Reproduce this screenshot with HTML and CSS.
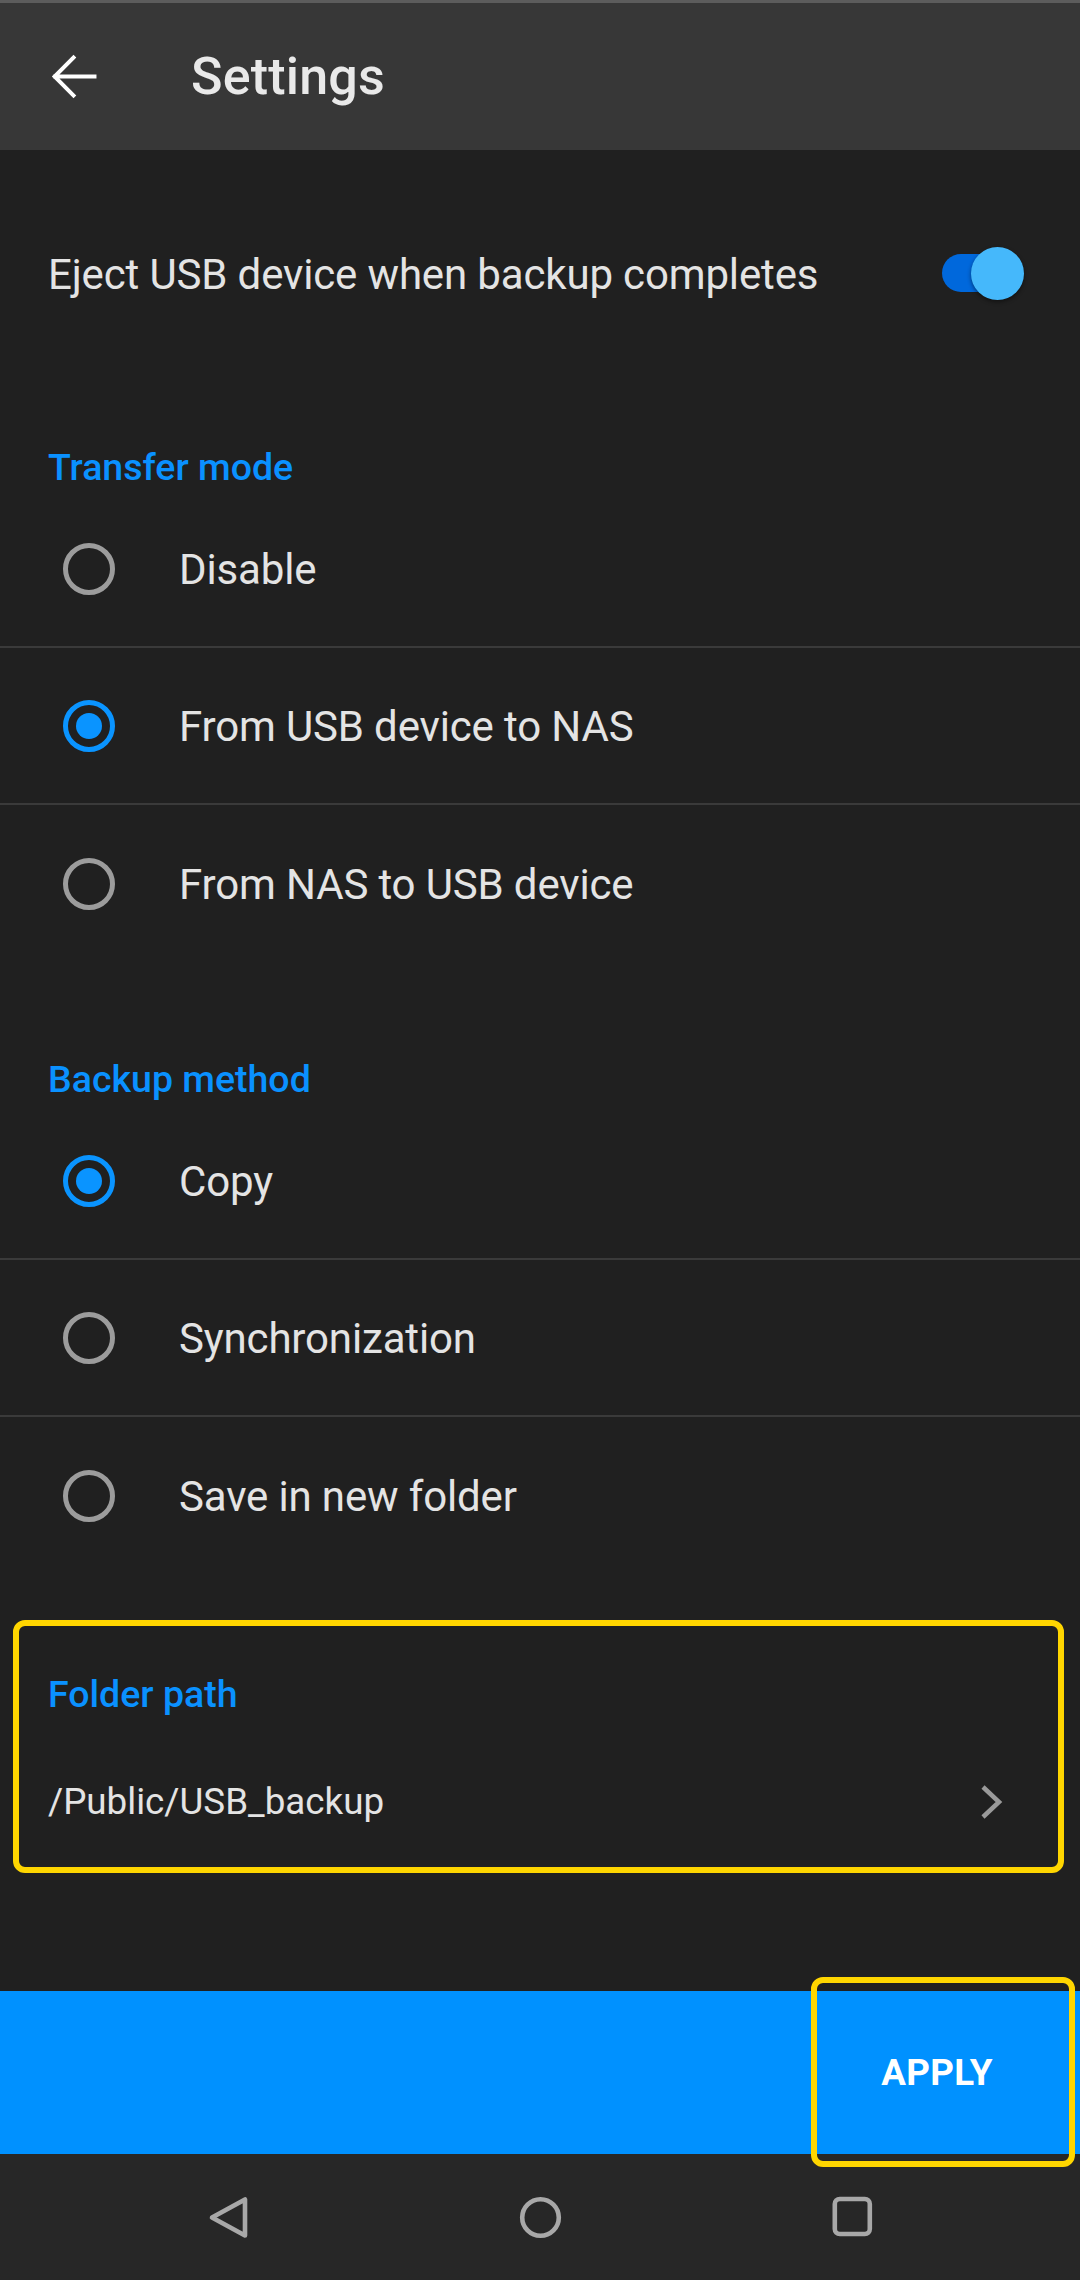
FILE: index.html
```
<!DOCTYPE html>
<html>
<head>
<meta charset="utf-8">
<link rel="stylesheet" href="styles.css">
</head>
<body>
<div class="screen">
  <div class="statusline"></div>
  <header class="appbar">
    <svg class="back" viewBox="0 0 24 24" width="63" height="63"><path d="M20 12H5M12 4.8L4.8 12l7.2 7.2" fill="none" stroke="#ffffff" stroke-width="1.5" stroke-linecap="square"/></svg>
    <h1 class="title">Settings</h1>
  </header>
  <main class="content">
    <div class="switch-row">
      <span class="label">Eject USB device when backup completes</span>
      <span class="switch"><span class="track"></span><span class="thumb"></span></span>
    </div>

    <div class="section-title first">Transfer mode</div>
    <div class="radio-group">
      <div class="radio-row"><span class="radio"></span><span class="label">Disable</span></div>
      <div class="radio-row"><span class="radio on"></span><span class="label">From USB device to NAS</span></div>
      <div class="radio-row"><span class="radio"></span><span class="label">From NAS to USB device</span></div>
    </div>

    <div class="section-title second">Backup method</div>
    <div class="radio-group">
      <div class="radio-row"><span class="radio on"></span><span class="label">Copy</span></div>
      <div class="radio-row"><span class="radio"></span><span class="label">Synchronization</span></div>
      <div class="radio-row"><span class="radio"></span><span class="label">Save in new folder</span></div>
    </div>

    <div class="folder-box">
      <div class="folder-title">Folder path</div>
      <div class="path-row">
        <span class="path">/Public/USB_backup</span>
        <svg class="chev" viewBox="0 0 30 40" width="30" height="40"><path d="M6 5L22 20L6 35" fill="none" stroke="#9a9a9a" stroke-width="4.5"/></svg>
      </div>
    </div>
  </main>
  <div class="action-bar">
    <div class="apply">APPLY</div>
  </div>
  <nav class="navbar">
    <svg class="nav-icon" viewBox="0 0 63 63" width="63" height="63"><path d="M15 31.5L48 13.5V49.5Z" fill="none" stroke="#a8a8a8" stroke-width="4.6" stroke-linejoin="round"/></svg>
    <svg class="nav-icon" viewBox="0 0 63 63" width="63" height="63"><circle cx="31.5" cy="31.5" r="18.3" fill="none" stroke="#a8a8a8" stroke-width="4.6"/></svg>
    <svg class="nav-icon" viewBox="0 0 63 63" width="63" height="63"><rect x="13.8" y="13" width="35" height="35" rx="5" fill="none" stroke="#a8a8a8" stroke-width="4.6"/></svg>
  </nav>
</div>
</body>
</html>
```
FILE: styles.css
```
* { box-sizing: border-box; }
html, body { margin: 0; padding: 0; }
body {
  background: #202020;
  font-family: Roboto, "Noto Sans", "Liberation Sans", sans-serif;
  color: #e4e4e4;
}
.screen {
  width: 1080px;
  height: 2280px;
  display: flex;
  flex-direction: column;
  background: #202020;
  overflow: hidden;
}
.statusline { height: 3px; background: #5c5c5c; flex: none; }
.appbar {
  height: 147px;
  flex: none;
  background: #373737;
  display: flex;
  align-items: center;
  padding-left: 42px;
}
.back { display: block; flex: none; }
.title {
  margin: 0 0 0 86px;
  font-size: 52px;
  font-weight: 500;
  color: #e9e9e9;
  letter-spacing: 0.2px;
}
.content { flex: 1; display: flex; flex-direction: column; }
.label {
  font-size: 42px;
  color: #e4e4e4;
  line-height: 48px;
  letter-spacing: -0.15px;
  padding-top: 3px;
}
.switch-row {
  height: 246px;
  display: flex;
  align-items: center;
  justify-content: space-between;
  padding: 0 56px 0 48px;
}
.switch { position: relative; width: 82px; height: 53px; flex: none; }
.track {
  position: absolute;
  left: 0; top: 7.5px;
  width: 76px; height: 38px;
  border-radius: 19px;
  background: #0068dc;
}
.thumb {
  position: absolute;
  right: 0; top: 0;
  width: 53px; height: 53px;
  border-radius: 50%;
  background: #45b8fb;
  box-shadow: 0 2px 4px rgba(0,0,0,0.45);
}
.section-title {
  font-size: 37.5px;
  font-weight: 500;
  color: #0a91ff;
  line-height: 48px;
  padding-left: 48px;
}
.section-title.first { padding-top: 47px; }
.section-title.second { padding-top: 93px; }
.radio-group { display: flex; flex-direction: column; }
.radio-row {
  height: 157px;
  display: flex;
  align-items: center;
  padding-left: 63px;
  border-bottom: 2px solid #3a3a3a;
}
.radio-row:last-child { border-bottom: none; }
.radio {
  width: 52px; height: 52px;
  border-radius: 50%;
  border: 5.3px solid #9c9c9c;
  margin-right: 64px;
  flex: none;
  display: flex;
  align-items: center;
  justify-content: center;
}
.radio.on { border-color: #0a94ff; }
.radio.on::after {
  content: "";
  width: 26px; height: 26px;
  border-radius: 50%;
  background: #0a94ff;
}
.folder-box {
  margin: 46px 16px 0 13px;
  height: 253px;
  border: 6px solid #ffd600;
  border-radius: 12px;
  padding: 44px 53px 0 29px;
}
.folder-title {
  font-size: 37.5px;
  font-weight: 500;
  color: #0a91ff;
  line-height: 48px;
}
.path-row {
  margin-top: 60px;
  height: 48px;
  display: flex;
  align-items: center;
  justify-content: space-between;
}
.path { font-size: 36.75px; color: #e4e4e4; line-height: 48px; }
.chev { display: block; margin-right: -2px; }
.action-bar {
  height: 163px;
  flex: none;
  background: #0091ff;
  display: flex;
  justify-content: flex-end;
}
.apply {
  position: relative;
  width: 252px;
  margin-right: 17px;
  display: flex;
  align-items: center;
  justify-content: center;
  font-size: 36.75px;
  font-weight: 700;
  color: #ffffff;
  letter-spacing: 0.3px;
}
.apply::after {
  content: "";
  position: absolute;
  top: -14px; bottom: -13px; left: 0; right: -12px;
  border: 6px solid #ffd600;
  border-radius: 12px;
}
.navbar {
  height: 126px;
  flex: none;
  background: #272727;
  display: flex;
  align-items: center;
  justify-content: center;
  gap: 249px;
}
.nav-icon { display: block; }
```
